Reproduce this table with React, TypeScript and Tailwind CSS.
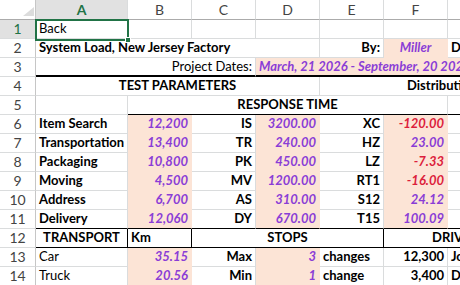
import type { ReactNode } from 'react';
import { twMerge } from 'tailwind-merge';

const PEACH = 'bg-[#fce4d6] border-[#fce4d6]';
const VAL = 'justify-end font-bold italic text-[#8a3dd6]';
const NEG = 'justify-end font-bold italic text-[#dc1e3c]';
const CODE = 'justify-end font-bold';
const LINE = 'border-b-black';

function Cell({ className, children }: { className?: string; children?: ReactNode }) {
  return (
    <div
      className={twMerge(
        'flex items-end pb-[3px] overflow-hidden whitespace-nowrap px-[3px] border-r border-b border-[#dadcdd]',
        className
      )}
    >
      {children}
    </div>
  );
}

function RowHead({ n, active }: { n: number; active?: boolean }) {
  return (
    <div
      className={twMerge(
        'flex items-center justify-center text-[14px] border-r border-b border-r-[#c6c6c6] border-b-[#dadcdd] bg-white text-[#444]',
        active && 'bg-[#e1e1e1] text-[#217346]'
      )}
    >
      {n}
    </div>
  );
}

function ColHead({ l, active }: { l: string; active?: boolean }) {
  return (
    <div
      className={twMerge(
        'flex items-center justify-center text-[14px] border-r border-b border-r-[#dadcdd] border-b-[#ababab] bg-white text-[#444]',
        active && 'bg-[#e1e1e1] text-[#217346] font-bold'
      )}
    >
      {l}
    </div>
  );
}

const params = [
  ['Item Search', '12,200', 'IS', '3200.00', 'XC', '-120.00'],
  ['Transportation', '13,400', 'TR', '240.00', 'HZ', '23.00'],
  ['Packaging', '10,800', 'PK', '450.00', 'LZ', '-7.33'],
  ['Moving', '4,500', 'MV', '1200.00', 'RT1', '-16.00'],
  ['Address', '6,700', 'AS', '310.00', 'S12', '24.12'],
  ['Delivery', '12,060', 'DY', '670.00', 'T15', '100.09'],
];

const transport = [
  ['Car', '35.15', 'Max', '3', 'changes', '12,300', 'Jones'],
  ['Truck', '20.56', 'Min', '1', 'change', '3,400', 'Davis'],
];

export default function App() {
  return (
    <div className="w-[460px] h-[285px] overflow-hidden bg-white">
      <div className="relative w-[512px] font-['Lato',sans-serif] text-[13px] text-black leading-none">
        <div className="grid grid-cols-[36px_92px_64px_64px_64px_64px_64px_64px] grid-rows-[20px_repeat(14,19px)]">
          {/* column headers */}
          <div className="relative border-r border-b border-r-[#c6c6c6] border-b-[#ababab] bg-white">
            <svg className="absolute right-[1px] bottom-[3px]" width="11" height="9" viewBox="0 0 11 9">
              <polygon points="11,0 11,9 0,9" fill="#dcdcdc" />
            </svg>
          </div>
          <ColHead l="A" active />
          <ColHead l="B" />
          <ColHead l="C" />
          <ColHead l="D" />
          <ColHead l="E" />
          <ColHead l="F" />
          <ColHead l="G" />

          {/* 1 */}
          <RowHead n={1} active />
          <Cell>Back</Cell>
          <Cell />
          <Cell />
          <Cell />
          <Cell />
          <Cell />
          <Cell />

          {/* 2 */}
          <RowHead n={2} />
          <Cell className="col-span-4 font-bold">System Load, New Jersey Factory</Cell>
          <Cell className="justify-end font-bold">By:</Cell>
          <Cell className={twMerge(PEACH, 'justify-center font-bold italic text-[#8a3dd6]')}>Miller</Cell>
          <Cell className="font-bold">Date:</Cell>

          {/* 3 */}
          <RowHead n={3} />
          <Cell className="col-span-3 justify-end border-b-2 border-b-black pb-[2px]">Project Dates:</Cell>
          <Cell className={twMerge(PEACH, 'col-span-4 font-bold italic text-[#8a3dd6] border-b-2 border-b-black pb-[2px]')}>
            March, 21 2026 - September, 20 2026
          </Cell>

          {/* 4 */}
          <RowHead n={4} />
          <Cell className="col-span-4 justify-center font-bold">TEST PARAMETERS</Cell>
          <Cell className="col-span-3 pl-[87px] font-bold">Distribution</Cell>

          {/* 5 */}
          <RowHead n={5} />
          <Cell />
          <Cell className={twMerge('col-span-5 justify-center font-bold', LINE)}>RESPONSE TIME</Cell>
          <Cell className={LINE} />

          {/* 6 - 11 */}
          {params.map((r, i) => {
            const last = i === params.length - 1;
            const b = last ? LINE : '';
            return [
              <RowHead key={`h${i}`} n={6 + i} />,
              <Cell key={`a${i}`} className={twMerge('font-bold', b)}>{r[0]}</Cell>,
              <Cell key={`b${i}`} className={twMerge(PEACH, VAL, b)}>{r[1]}</Cell>,
              <Cell key={`c${i}`} className={twMerge(CODE, b)}>{r[2]}</Cell>,
              <Cell key={`d${i}`} className={twMerge(PEACH, VAL, b)}>{r[3]}</Cell>,
              <Cell key={`e${i}`} className={twMerge(CODE, b)}>{r[4]}</Cell>,
              <Cell key={`f${i}`} className={twMerge(PEACH, r[5].startsWith('-') ? NEG : VAL, b)}>{r[5]}</Cell>,
              <Cell key={`g${i}`} className={b} />,
            ];
          })}

          {/* 12 */}
          <RowHead n={12} />
          <Cell className={twMerge('justify-center font-bold border-r-black', LINE)}>TRANSPORT</Cell>
          <Cell className={twMerge('font-bold border-r-black', LINE)}>Km</Cell>
          <Cell className={twMerge('col-span-3 justify-center font-bold border-r-black', LINE)}>STOPS</Cell>
          <Cell className={twMerge('col-span-2 pl-[48px] font-bold', LINE)}>DRIVERS</Cell>

          {/* 13 - 14 */}
          {transport.map((r, i) => [
            <RowHead key={`th${i}`} n={13 + i} />,
            <Cell key={`ta${i}`}>{r[0]}</Cell>,
            <Cell key={`tb${i}`} className={twMerge(PEACH, VAL)}>{r[1]}</Cell>,
            <Cell key={`tc${i}`} className={CODE}>{r[2]}</Cell>,
            <Cell key={`td${i}`} className={twMerge(PEACH, VAL)}>{r[3]}</Cell>,
            <Cell key={`te${i}`} className="font-bold">{r[4]}</Cell>,
            <Cell key={`tf${i}`} className={CODE}>{r[5]}</Cell>,
            <Cell key={`tg${i}`} className="font-bold">{r[6]}</Cell>,
          ])}
        </div>

        {/* active cell selection */}
        <div className="absolute left-[35px] top-[19px] w-[94px] h-[22px] border-2 border-[#217346] pointer-events-none" />
        <div className="absolute left-[125px] top-[37px] w-[6px] h-[6px] bg-[#217346] border border-white pointer-events-none" />
      </div>
    </div>
  );
}
